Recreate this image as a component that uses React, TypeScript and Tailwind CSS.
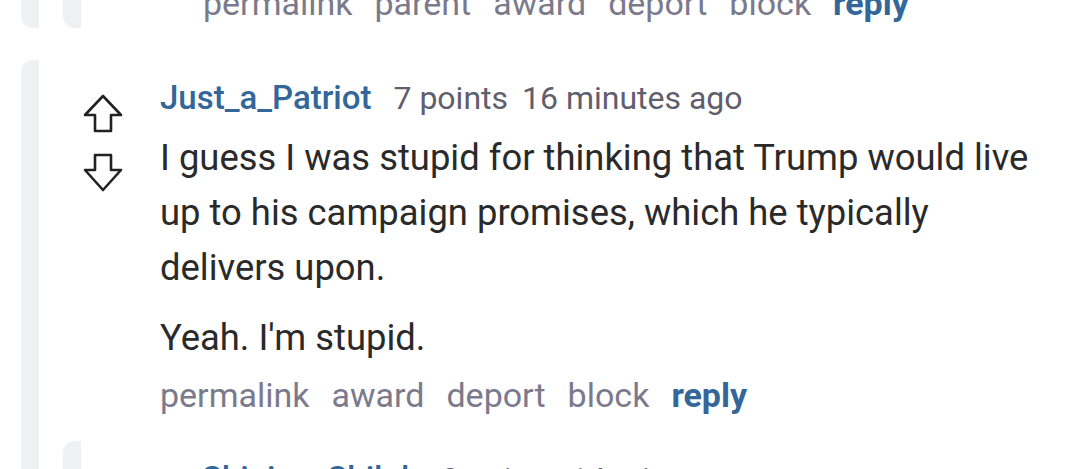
import type { ReactNode } from "react";

const bar = "border-l-[18px] border-[#eff0f2]";

function UpArrow() {
  return (
    <svg width="40" height="39" viewBox="0 0 40 39" fill="none" stroke="#222" strokeWidth="2.6" strokeLinejoin="round">
      <path d="M20 2 L2 21 H12 V37 H28 V21 H38 Z" />
    </svg>
  );
}

function DownArrow() {
  return (
    <svg width="40" height="39" viewBox="0 0 40 39" fill="none" stroke="#222" strokeWidth="2.6" strokeLinejoin="round">
      <path d="M12 2 H28 V17 H38 L20 37 L2 17 H12 Z" />
    </svg>
  );
}

function Links({ items }: { items: string[] }) {
  return (
    <div className="flex gap-[22px] text-[34px] leading-[40px] text-[#7b7a8c] whitespace-nowrap">
      {items.map((l) => (
        <span key={l}>{l}</span>
      ))}
      <span className="font-bold text-[#336699]">reply</span>
    </div>
  );
}

function Meta({ name, points, time }: { name: string; points: number; time: string }) {
  return (
    <div className="flex items-baseline gap-[22px] leading-[40px] whitespace-nowrap">
      <span className="text-[33px] font-medium text-[#336699]">{name}</span>
      <span className="text-[32px] text-[#5f5e6d]">
        {points} points <span className="ml-[6px]">{time}</span>
      </span>
    </div>
  );
}

function Votes() {
  return (
    <div className="flex flex-col gap-[20px] pt-[34px] pl-[44px] w-[121px] shrink-0">
      <UpArrow />
      <DownArrow />
    </div>
  );
}

function Comment({ children, nested }: { children: ReactNode; nested?: ReactNode }) {
  return (
    <div className={`${bar} rounded-tl-[12px]`}>
      <div className="flex">
        <Votes />
        <div className="pt-[18px]">{children}</div>
      </div>
      {nested}
    </div>
  );
}

export default function App() {
  return (
    <div className="h-[469px] overflow-hidden bg-white font-['Roboto',sans-serif]">
      {/* end of the thread above */}
      <div className={`ml-[21px] -mt-[17px] ${bar} rounded-bl-[12px]`}>
        <div className={`ml-[24px] ${bar} rounded-bl-[12px] pl-[122px] pb-[5px]`}>
          <Links items={["permalink", "parent", "award", "deport", "block"]} />
        </div>
      </div>

      <div className="mt-[32px] ml-[21px]">
        <Comment
          nested={
            <div className="ml-[24px] mt-[26px]">
              <Comment>
                <Meta name="Shining_Shiloh" points={3} time="14 minutes ago" />
              </Comment>
            </div>
          }
        >
          <Meta name="Just_a_Patriot" points={7} time="16 minutes ago" />
          <div className="mt-[12px] text-[36.4px] leading-[55px] text-[#2a2a2a] pr-[30px]">
            <p>
              I guess I was stupid for thinking that Trump would live up to his campaign promises, which he typically
              delivers upon.
            </p>
            <p className="mt-[15px]">Yeah. I'm stupid.</p>
          </div>
          <div className="mt-[10px]">
            <Links items={["permalink", "award", "deport", "block"]} />
          </div>
        </Comment>
      </div>
    </div>
  );
}
